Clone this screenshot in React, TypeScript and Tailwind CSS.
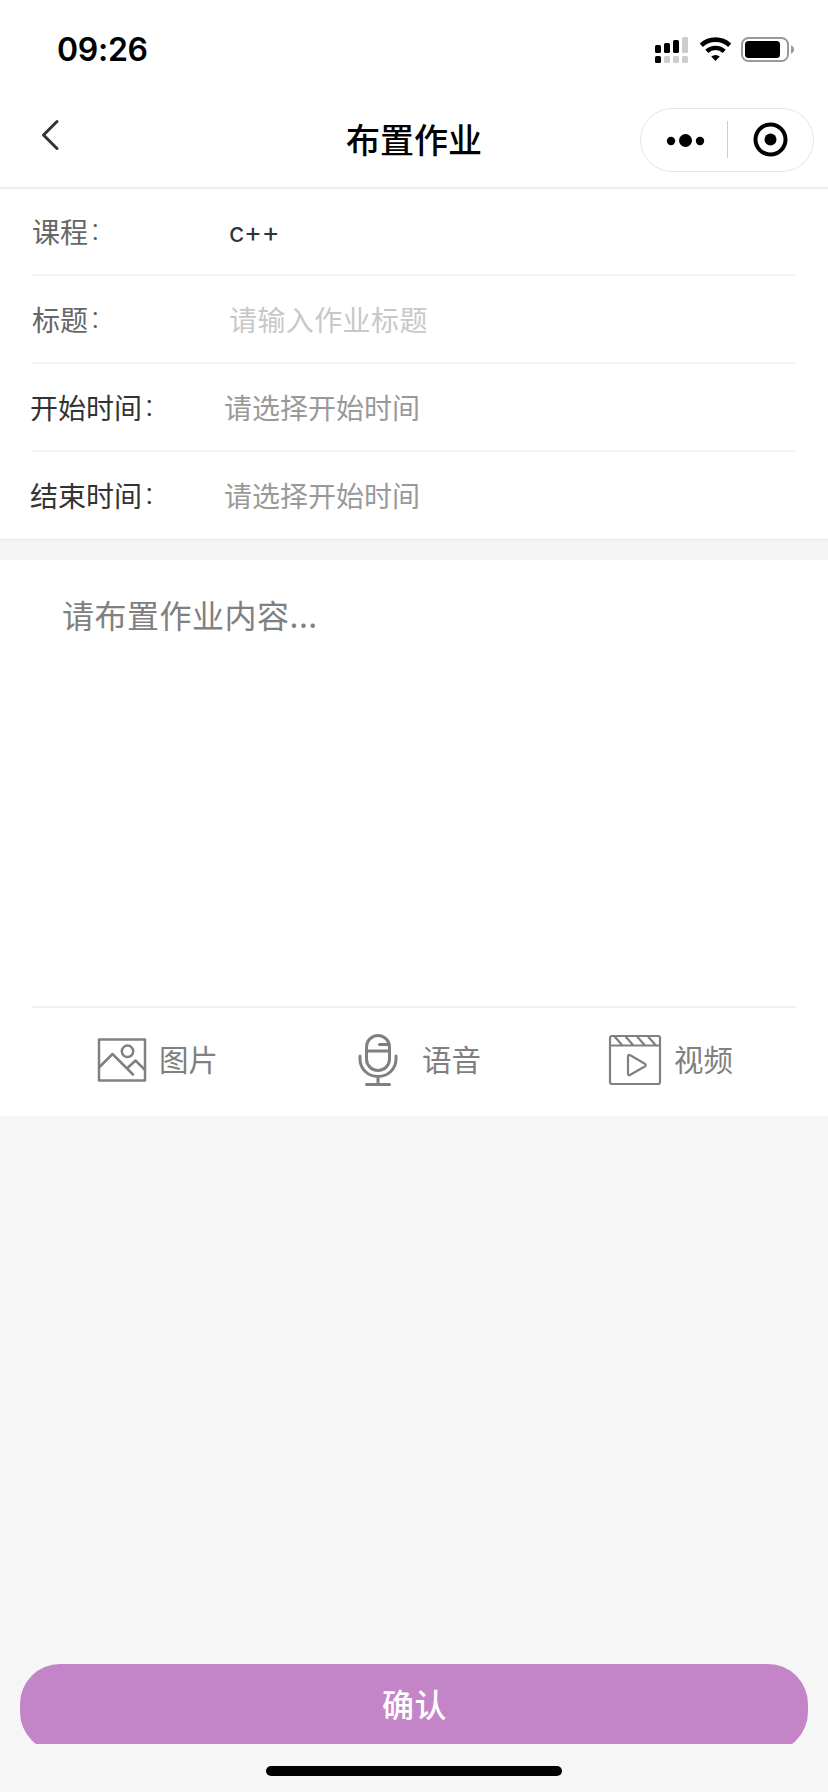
import type { ReactNode } from 'react'

type Field = {
  label: string
  text: string
  labelClass: string
  textClass: string
}

const fields: Field[] = [
  { label: '课程', text: 'c++', labelClass: 'pl-[32px] w-[229px] text-[#666]', textClass: 'pt-[4px] text-[#333] font-["Inter"] text-[27px] tracking-[-0.3px]' },
  { label: '标题', text: '请输入作业标题', labelClass: 'pl-[32px] w-[229px] text-[#666]', textClass: 'text-[#c8c8c8] tracking-[0.4px]' },
  { label: '开始时间', text: '请选择开始时间', labelClass: 'pl-[30px] w-[224px] text-[#333]', textClass: 'text-[#999]' },
  { label: '结束时间', text: '请选择开始时间', labelClass: 'pl-[30px] w-[224px] text-[#333]', textClass: 'text-[#999]' },
]

function StatusBar() {
  return (
    <div className="flex h-[100px] items-center justify-between pl-[57px] pr-[34px]">
      <span className="font-['Inter'] text-[32px] font-semibold leading-none tracking-[-0.3px]">09:26</span>
      <div className="flex items-center">
        <svg width="140" height="28" viewBox="0 0 140 28">
          {/* signal */}
          <rect x="1" y="9" width="6" height="8" rx="1.5" />
          <rect x="10" y="7" width="6" height="10" rx="1.5" />
          <rect x="19" y="4" width="6" height="13" rx="1.5" />
          <rect x="28" y="1" width="6" height="16" rx="1.5" fill="#ccc" />
          <rect x="1" y="20" width="6" height="7" rx="1.5" />
          <rect x="10" y="20" width="6" height="7" rx="1.5" fill="#ccc" />
          <rect x="19" y="20" width="6" height="7" rx="1.5" fill="#ccc" />
          <rect x="28" y="20" width="6" height="7" rx="1.5" fill="#ccc" />
          {/* wifi */}
          <path d="M47.3 9.2a21 21 0 0 1 28.4 0" fill="none" stroke="#000" strokeWidth="4.6" />
          <path d="M52.8 15.3a12.8 12.8 0 0 1 17.4 0" fill="none" stroke="#000" strokeWidth="4.4" />
          <path d="M57.2 20.6a6.6 6.6 0 0 1 8.6 0L61.5 25z" />
          {/* battery */}
          <rect x="88" y="2" width="46" height="23" rx="6.5" fill="none" stroke="#999" strokeWidth="2" />
          <rect x="91" y="5" width="35" height="17" rx="3.5" />
          <path d="M137 9.3c2 .8 3 2.4 3 4.2s-1 3.4-3 4.2z" fill="#999" />
        </svg>
      </div>
    </div>
  )
}

function NavBar() {
  return (
    <div className="grid h-[89px] grid-cols-[1fr_auto_1fr] border-b-2 border-[#ebebf0]">
      <div className="pl-[40px] pt-[18px]">
        <svg width="20" height="34" viewBox="0 0 20 34" fill="none" stroke="#333" strokeWidth="3" strokeLinecap="round" strokeLinejoin="round">
          <path d="M17 3.5L3.5 17L17 30.5" />
        </svg>
      </div>
      <h1 className="pt-[14px] text-[34px] font-medium leading-[50px]">布置作业</h1>
      <div className="flex justify-end pr-[14px] pt-[8px]">
        <div className="flex h-[64px] w-[174px] items-center rounded-full border border-[#e5e5e5]">
          <svg width="172" height="62" viewBox="0 0 172 62">
            <circle cx="30" cy="32" r="4.2" />
            <circle cx="44.5" cy="31.5" r="6.5" />
            <circle cx="59" cy="32" r="4.2" />
            <path d="M86.5 12v37" stroke="#ccc" />
            <circle cx="129.5" cy="30.5" r="15" fill="none" stroke="#000" strokeWidth="4" />
            <circle cx="129.5" cy="30.5" r="6" />
          </svg>
        </div>
      </div>
    </div>
  )
}

function FieldRow({ field, last, first }: { field: Field; last: boolean; first: boolean }) {
  return (
    <div className={first ? 'h-[87px]' : 'h-[88px]'}>
      <div className={`flex items-center pb-px text-[28px] leading-[40px] ${first ? 'h-[85px]' : last ? 'h-[87px]' : 'h-[86px]'}`}>
        <span className={`flex ${field.labelClass}`}>
          {field.label}
          <span className="-mt-[2px] pl-px text-[25px] font-light">：</span>
        </span>
        <span className={field.textClass}>{field.text}</span>
      </div>
      <div className={last ? 'h-px bg-[#e8e8e8]' : 'mx-[32px] h-[2px] bg-[#f5f5f5]'} />
    </div>
  )
}

function Tool({ label, className, children }: { label: string; className: string; children: ReactNode }) {
  return (
    <button className={`flex items-center text-[29.5px] leading-[40px] ${className}`}>
      {children}
      <span className="-mt-[3px]">{label}</span>
    </button>
  )
}

export default function App() {
  return (
    <div className="flex h-[1792px] w-[828px] flex-col bg-[#f6f6f6] font-['Noto_Sans_CJK_SC',sans-serif] text-black">
      <header className="bg-white">
        <StatusBar />
        <NavBar />
      </header>

      <section className="bg-white">
        {fields.map((field, i) => (
          <FieldRow key={field.label} field={field} first={i === 0} last={i === fields.length - 1} />
        ))}
      </section>

      <section className="border-t-[20px] border-[#f5f5f5] bg-white">
        <div className="h-[446px] pl-[62px] pt-[30px] text-[32px] leading-[48px] tracking-[0.5px] text-[#808080]">
          请布置作业内容...
        </div>
        <div className="mx-[32px] h-[2px] bg-[#f0f0f0]" />
        <div className="flex h-[108px] items-center pb-[5px] text-[#808080]">
          <Tool label="图片" className="w-[358px] gap-[12px] pl-[97px]">
            <svg width="50" height="44" viewBox="0 0 50 44" fill="none" stroke="#808080" strokeWidth="2.5" strokeLinecap="round" strokeLinejoin="round">
              <path d="M2 1.5h46v41H2z" />
              <circle cx="30.5" cy="13.3" r="5.7" />
              <path d="M2 29.5L15.500 16L36 36.500M30 30.500L38.500 22.500L48 32" />
            </svg>
          </Tool>
          <Tool label="语音" className="w-[250px] gap-[24px]">
            <svg width="40" height="54" viewBox="0 0 40 54" fill="none" stroke="#808080" strokeWidth="3" strokeLinecap="round">
              <rect x="8.5" y="2.5" width="23" height="35" rx="11.5" />
              <path d="M9 18h22M21.5 11.5H31M2 23v3c0 10 8 17.500 18 17.500S38 36 38 26v-3M20 44v7M8.500 51.500h23" />
            </svg>
          </Tool>
          <Tool label="视频" className="gap-[12px]">
            <svg width="54" height="52" viewBox="0 0 54 52" fill="none" stroke="#808080" strokeWidth="2.2" strokeLinecap="round" strokeLinejoin="round">
              <rect x="2" y="2" width="50" height="48" rx="2" />
              <path d="M2 11.5h50M7 3l7 8M18 3l7 8M29.5 3l7 8M40.5 3l7 8" />
              <path d="M20 22.5v17q0 2.5 2.3 1.2l14.5-8.200q2-1.300 0-2.700L22.300 21.300Q20 20 20 22.500z" />
            </svg>
          </Tool>
        </div>
      </section>

      <div className="mt-[548px] h-[80px] overflow-hidden px-[20px]">
        <button className="h-[88px] w-full rounded-[40px] bg-[#c485c8] pb-[11px] pl-px text-[32px] font-medium tracking-[0.5px] text-white">
          确认
        </button>
      </div>
      <div className="mx-auto mt-[22px] h-[10px] w-[296px] rounded-full bg-black" />
    </div>
  )
}
